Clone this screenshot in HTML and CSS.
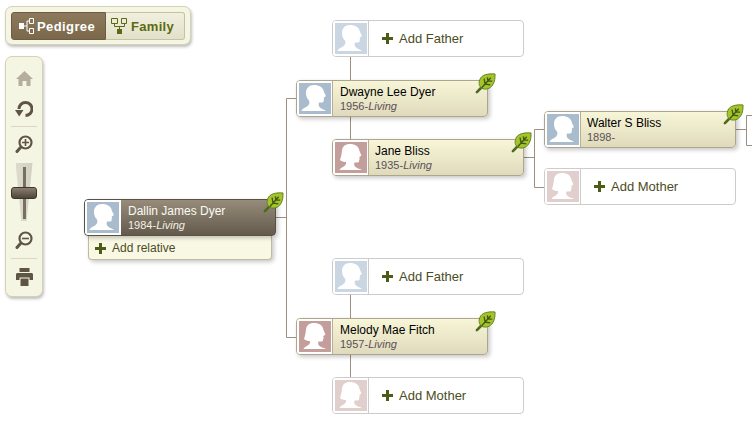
FILE: index.html
```html
<!DOCTYPE html>
<html>
<head>
<title>Family Tree</title>
<link rel="stylesheet" href="styles.css">
</head>
<body>
<svg class="defs" width="0" height="0">
  <defs>
    <symbol id="male" viewBox="0 0 32 31">
      <path fill="#fff" d="M15 2C10 2 7 5.500 7 10C7 13 8 15.500 10 17.500C11 20 10 22 8 23.500C6.500 24.700 3 25.500 2.500 28L27 28C25.500 26.500 22 26 20.500 24C19.500 22.500 19.500 21 20 19.500L23 19.500C24.500 19.500 25 18 24.500 17L25.200 16L24.600 14.800L25.500 14C27 13.500 27 13 26.500 12L25 9C24.500 4.500 20 2 15 2Z"/>
    </symbol>
    <symbol id="female" viewBox="0 0 32 31">
      <path fill="#fff" d="M15 2C10 2 7.500 4.500 7 8.500C6.700 12 6 15 5 18C6.500 19.500 8.500 20 11 20C11.500 22 10 24 8 25C6.500 25.700 5 26.500 4.500 28L27 28C25.500 27 22 26.500 20 24.500C19 23 19 21.500 19.500 20.500L22.500 20.500C24 20.500 24.500 19 24 18L24.800 17L24.200 15.500L25 14.500C26.500 14 26.500 13.500 26 12.500L24.500 9C24 4.500 20 2 15 2Z"/>
    </symbol>
    <symbol id="leaf" viewBox="0 0 22 22">
      <path fill="none" stroke="#4e6a1c" stroke-width="2.800" stroke-linecap="round" d="M2 20L7 15"/>
      <path fill="#a6c32a" stroke="#5f8020" d="M21 1C14 .500 7 1.500 5 7C3.500 11 4.500 14 7 16C11 18 16 16.500 18.500 12.500C21 8.500 21 5 21 1Z"/>
      <path fill="none" stroke="#3f5a16" stroke-width="1.400" d="M7 15.500L16.500 5M10.500 11.500L9.500 6M10.500 11.500L16 12.500M13.500 8.500L13 4.500M13.500 8.500L18 8.500"/>
    </symbol>
    <symbol id="plus" viewBox="0 0 11 11">
      <path fill="#4c5c16" d="M4 0H7V4H11V7H7V11H4V7H0V4H4Z"/>
    </symbol>
  </defs>
</svg>

<div class="tree">
  <svg class="lines" width="752" height="430">
    <path fill="none" stroke="#9c8f80" d="M276 217.500H286.500M297 98.500H286.500V337.500H297M350.500 57V80M350.500 117V139M350.500 295V318M350.500 355V377M524 157.500H534.500M545 129.500H534.500V187.500H545M736 129.500H746.500M752 115.500H746.500V145.500H752"/>
  </svg>

  <div class="node empty father-1">
    <span class="photo male-faded"><svg><use href="#male"/></svg></span>
    <div class="add"><svg class="plus"><use href="#plus"/></svg>Add Father</div>
  </div>

  <div class="node person dwayne">
    <span class="photo male"><svg><use href="#male"/></svg></span>
    <div class="info">
      <div class="name">Dwayne Lee Dyer</div>
      <div class="dates">1956-<i>Living</i></div>
    </div>
    <svg class="leaf"><use href="#leaf"/></svg>
  </div>

  <div class="node person jane">
    <span class="photo female"><svg><use href="#female"/></svg></span>
    <div class="info">
      <div class="name">Jane Bliss</div>
      <div class="dates">1935-<i>Living</i></div>
    </div>
    <svg class="leaf"><use href="#leaf"/></svg>
  </div>

  <div class="node person walter">
    <span class="photo male"><svg><use href="#male"/></svg></span>
    <div class="info">
      <div class="name">Walter S Bliss</div>
      <div class="dates">1898-</div>
    </div>
    <svg class="leaf"><use href="#leaf"/></svg>
  </div>

  <div class="node empty mother-1">
    <span class="photo female-faded"><svg><use href="#female"/></svg></span>
    <div class="add"><svg class="plus"><use href="#plus"/></svg>Add Mother</div>
  </div>

  <div class="add-relative">
    <svg class="plus"><use href="#plus"/></svg>Add relative
  </div>

  <div class="node person selected dallin">
    <span class="photo male"><svg><use href="#male"/></svg></span>
    <div class="info">
      <div class="name">Dallin James Dyer</div>
      <div class="dates">1984-<i>Living</i></div>
    </div>
    <svg class="leaf"><use href="#leaf"/></svg>
  </div>

  <div class="node empty father-2">
    <span class="photo male-faded"><svg><use href="#male"/></svg></span>
    <div class="add"><svg class="plus"><use href="#plus"/></svg>Add Father</div>
  </div>

  <div class="node person melody">
    <span class="photo female"><svg><use href="#female"/></svg></span>
    <div class="info">
      <div class="name">Melody Mae Fitch</div>
      <div class="dates">1957-<i>Living</i></div>
    </div>
    <svg class="leaf"><use href="#leaf"/></svg>
  </div>

  <div class="node empty mother-2">
    <span class="photo female-faded"><svg><use href="#female"/></svg></span>
    <div class="add"><svg class="plus"><use href="#plus"/></svg>Add Mother</div>
  </div>
</div>

<div class="switcher">
  <div class="switch-btn active">
    <svg width="16" height="16" viewBox="0 0 16 16">
      <path fill="#fff" d="M1 5H6V11H1Z"/>
      <path fill="none" stroke="#fff" d="M6 8H9M9 3V13M11.500 .500H15.500V5.500H11.500ZM11.500 10.500H15.500V15.500H11.500ZM9 3H11.500M9 13H11.500"/>
    </svg>
    Pedigree
  </div>
  <div class="switch-btn">
    <svg width="16" height="16" viewBox="0 0 16 16">
      <path fill="none" stroke="#5a6a10" d="M.500 .500H6.500V5.500H.500ZM10.500 .500H15.500V5.500H10.500ZM3.500 5.500V8.500H13.500V5.500M8.500 8.500V11"/>
      <path fill="#5a6a10" d="M6 11H11V16H6Z"/>
    </svg>
    Family
  </div>
</div>

<div class="toolbar">
  <svg class="tool" width="17" height="16" viewBox="0 0 17 16">
    <path fill="#b5ae9e" d="M8.500 0L17 8H14.500V15H10.500V10H6.500V15H2.500V8H0Z"/>
  </svg>
  <svg class="tool rotate" width="18" height="19" viewBox="0 0 18 19">
    <path fill="none" stroke="#5f5545" stroke-width="3" d="M10.500 15.500A6.500 6.500 0 1 0 4 9"/>
    <path fill="#5f5545" d="M0 10H8.500L4.200 16.500Z"/>
  </svg>
  <div class="sep"></div>
  <svg class="tool zoom-in" width="18" height="19" viewBox="0 0 18 19">
    <circle cx="10.500" cy="7.500" r="6" fill="none" stroke="#5f5545" stroke-width="2.200"/>
    <path stroke="#5f5545" stroke-width="3" stroke-linecap="round" d="M5.500 12.500L2 16.500"/>
    <path stroke="#5f5545" stroke-width="1.600" d="M7 7.500H14M10.500 4V11"/>
  </svg>
  <div class="slider">
    <div class="slider-track"><div class="slider-line"></div></div>
    <div class="slider-handle"></div>
  </div>
  <svg class="tool zoom-out" width="18" height="19" viewBox="0 0 18 19">
    <circle cx="10.500" cy="7.500" r="6" fill="none" stroke="#5f5545" stroke-width="2.200"/>
    <path stroke="#5f5545" stroke-width="3" stroke-linecap="round" d="M5.500 12.500L2 16.500"/>
    <path stroke="#5f5545" stroke-width="1.600" d="M7 7.500H14"/>
  </svg>
  <div class="sep"></div>
  <svg class="tool printer" width="17" height="18" viewBox="0 0 17 18">
    <path fill="#5f5545" d="M3.500 0H13.500V4H3.500ZM1.500 5H15.500C16.300 5 17 5.700 17 6.500V12H13.500V9.500H3.500V12H0V6.500C0 5.700 .700 5 1.500 5ZM4.500 10.500H12.500V18H4.500Z"/>
  </svg>
</div>
</body>
</html>
```

FILE: styles.css
```css
html, body {
  margin: 0;
  height: 430px;
  overflow: hidden;
  background: #fff;
  font-family: "Liberation Sans", Arial, sans-serif;
}

.defs {
  position: absolute;
}

/* tree canvas */
.tree {
  position: relative;
  width: 752px;
  height: 430px;
  overflow: hidden;
}

.lines {
  position: absolute;
  left: 0;
  top: 0;
}

.node {
  position: absolute;
  box-sizing: border-box;
  width: 192px;
  height: 37px;
  display: flex;
  border-radius: 4px;
  background: #fff;
}

.photo {
  box-sizing: border-box;
  width: 36px;
  flex: none;
  padding: 2px;
  border-right: 1px solid #ccc;
  border-radius: 3px 0 0 3px;
  background: #fff;
}

.photo svg {
  display: block;
  width: 32px;
  height: 31px;
}

.male svg { background: #a9bccd; }
.female svg { background: #c39e9a; }
.male-faded svg { background: #cad7e2; }
.female-faded svg { background: #e0cfcd; }

.person {
  border: 1px solid #aea68c;
  background: linear-gradient(#f8f6d8, #e0dabc);
  box-shadow: 2px 2px 4px rgba(0, 0, 0, .22);
}

.person .photo {
  border-right-color: #b8b096;
}

.empty {
  border: 1px solid #ccc;
}

.info {
  padding: 4px 0 0 7px;
}

.jane .info,
.walter .info {
  padding-left: 6px;
}

.name {
  font-size: 12px;
  line-height: 15px;
  color: #000;
}

.dates {
  font-size: 11px;
  line-height: 14px;
  margin-top: -1px;
  color: #5a5056;
}

.add {
  display: flex;
  align-items: center;
  padding-left: 13px;
  font-size: 13px;
  color: #4c4c24;
}

.plus {
  width: 11px;
  height: 11px;
  margin-right: 6px;
  flex: none;
}

.leaf {
  position: absolute;
  right: -9px;
  top: -8px;
  width: 21px;
  height: 21px;
}

.selected {
  border-color: #5a5145;
  background: linear-gradient(#978c7a, #635a4d);
}

.selected .photo {
  border-right: 0;
}

.selected .name {
  color: #fbfbf3;
}

.selected .dates {
  color: #f3f1e4;
}

.add-relative {
  position: absolute;
  left: 88px;
  top: 236px;
  box-sizing: border-box;
  width: 184px;
  height: 24px;
  padding: 1px 0 0 6px;
  display: flex;
  align-items: center;
  font-size: 12px;
  color: #4c4c24;
  background: #f9f8e4;
  border: 1px solid #c2ba9e;
  border-top: 0;
  border-radius: 0 0 4px 4px;
  box-shadow: 2px 2px 4px rgba(0, 0, 0, .22);
}

.father-1 { left: 332px; top: 20px; }
.dwayne { left: 296px; top: 80px; }
.jane { left: 332px; top: 139px; }
.walter { left: 544px; top: 111px; }
.mother-1 { left: 544px; top: 168px; }
.dallin { left: 84px; top: 199px; }
.father-2 { left: 332px; top: 258px; }
.melody { left: 296px; top: 318px; }
.mother-2 { left: 332px; top: 377px; }

/* view switch */
.switcher {
  position: absolute;
  left: 5px;
  top: 6px;
  box-sizing: border-box;
  width: 186px;
  height: 39px;
  padding: 5px;
  display: flex;
  background: #f5f5e4;
  border: 1px solid #d6d2b6;
  border-radius: 7px;
  box-shadow: 1px 2px 3px rgba(0, 0, 0, .25);
}

.switch-btn {
  box-sizing: border-box;
  height: 28px;
  width: 79px;
  padding-left: 5px;
  display: flex;
  align-items: center;
  gap: 4px;
  font-size: 13px;
  letter-spacing: .3px;
  font-weight: bold;
  color: #5a6a10;
  background: linear-gradient(#f1f0de, #e2e0ca);
  border: 1px solid #c6c29e;
  border-left: 0;
  border-radius: 0 3px 3px 0;
}

.switch-btn.active {
  width: 95px;
  padding-left: 6px;
  gap: 3px;
  letter-spacing: .4px;
  color: #fff;
  background: linear-gradient(#8d7a5c, #7b684b);
  border: 1px solid #6d5d45;
  border-radius: 3px 0 0 3px;
}

/* tools */
.toolbar {
  position: absolute;
  left: 5px;
  top: 56px;
  box-sizing: border-box;
  width: 38px;
  height: 241px;
  padding-top: 14px;
  display: flex;
  flex-direction: column;
  align-items: center;
  background: #f5f5e4;
  border: 1px solid #d6d2b6;
  border-radius: 7px;
  box-shadow: 1px 2px 3px rgba(0, 0, 0, .25);
}

.tool {
  display: block;
  flex: none;
}

.rotate {
  margin-top: 13px;
}

.sep {
  width: 26px;
  height: 1px;
  flex: none;
  background: #dcd6be;
  margin-top: 7px;
}

.zoom-in {
  margin-top: 8px;
}

.slider {
  position: relative;
  width: 17px;
  height: 58px;
  margin-top: 9px;
  flex: none;
}

.slider-track {
  height: 58px;
  background: linear-gradient(90deg, #dcdbcd, #d2d0c0);
  clip-path: polygon(0 0, 100% 0, 65% 100%, 35% 100%);
}

.slider-line {
  width: 3px;
  height: 52px;
  margin: 0 auto;
  position: relative;
  top: 4px;
  background: #77705f;
}

/* lies over the track */
.slider-handle {
  position: absolute;
  left: -5px;
  top: 24px;
  box-sizing: border-box;
  width: 26px;
  height: 12px;
  background: linear-gradient(#8a7f6e, #4e463a);
  border: 1px solid #3c352b;
  border-radius: 3px;
}

.zoom-out {
  margin-top: 10px;
}

.sep + .printer {
  margin-top: 9px;
}

.zoom-out + .sep {
  margin-top: 8px;
}
```
